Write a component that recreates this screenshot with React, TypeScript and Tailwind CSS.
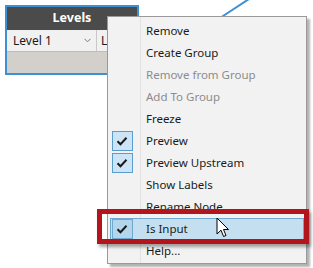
import React from "react";

type Item = { label: string; checked?: boolean; disabled?: boolean; active?: boolean };

const items: Item[] = [
  { label: "Remove" },
  { label: "Create Group" },
  { label: "Remove from Group", disabled: true },
  { label: "Add To Group", disabled: true },
  { label: "Freeze" },
  { label: "Preview", checked: true },
  { label: "Preview Upstream", checked: true },
  { label: "Show Labels" },
  { label: "Rename Node" },
  { label: "Is Input", checked: true, active: true },
  { label: "Help..." },
];

const Check = () => (
  <svg width="12" height="10" viewBox="0 0 12 10">
    <path d="M1.5 5.2 L4.5 8.2 L10.5 1.8" fill="none" stroke="#1a1a1a" strokeWidth="2" />
  </svg>
);

const MenuRow = ({ item }: { item: Item }) => (
  <div
    className={
      "flex h-[22px] items-center mx-[2px] border " +
      (item.active ? "bg-[#c4e0f0] border-[#6fa9d0]" : "border-transparent")
    }
  >
    <div className="w-[22px] h-full flex items-center justify-center shrink-0">
      {item.checked && (
        <div
          className={
            "w-[21px] h-[20px] flex items-center justify-center border " +
            (item.active ? "border-[#6fa9d0] bg-[#b3d6ec]" : "border-[#5a9ed0] bg-[#cce4f5]")
          }
        >
          <Check />
        </div>
      )}
    </div>
    <span
      className={
        "ml-[13px] text-[11.5px] " + (item.disabled ? "text-[#8c8c8c]" : "text-[#1a1a1a]")
      }
    >
      {item.label}
    </span>
  </div>
);

export default function App() {
  return (
    <div
      className="relative w-[313px] h-[268px] bg-white overflow-hidden"
      style={{ fontFamily: '"Noto Sans", "Open Sans", sans-serif' }}
    >
      {/* wire */}
      <svg className="absolute left-0 top-0" width="313" height="268">
        <line x1="220" y1="18" x2="249" y2="-1" stroke="#3f8fd4" strokeWidth="2" />
      </svg>

      {/* node */}
      <div className="relative ml-[5px] mt-[5px] w-[134px] border-2 border-[#3f8fd4] bg-[#d3d0cb]">
        <div className="h-[23px] bg-[#4b4b4b] flex items-center justify-center text-white font-bold text-[12.5px]">
          Levels
        </div>
        <div className="h-[22px] flex bg-[#f1f1f1] border-b border-[#bdbdbd]">
          <div className="w-[90px] flex items-center justify-between pl-[6px] pr-[5px] border-r border-[#c8c8c8] text-[12px] text-[#1a1a1a]">
            <span>Level 1</span>
            <svg width="7" height="5" viewBox="0 0 7 5">
              <path d="M0.5 0.8 L3.5 3.8 L6.5 0.8" fill="none" stroke="#777" strokeWidth="1" />
            </svg>
          </div>
          <div className="flex items-center pl-[4px] text-[12px] text-[#1a1a1a]">L</div>
        </div>
        <div className="h-[21px]" />
      </div>

      {/* context menu */}
      <div className="absolute left-[107px] top-[16px] w-[200px] h-[248px] bg-[#f2f2f2] border border-[#9a9a9a] shadow-[3px_3px_2px_rgba(0,0,0,0.3)] pt-[3px]">
        <div className="absolute left-[32px] top-0 bottom-0 w-px bg-[#e2e2e2]" />
        <div className="relative flex flex-col">
          {items.map((it) => (
            <MenuRow key={it.label} item={it} />
          ))}
        </div>
      </div>

      {/* highlight box */}
      <div className="absolute left-[97px] top-[209px] w-[212px] h-[35px] border-[5px] border-[#b3151d] shadow-[2px_3px_3px_rgba(0,0,0,0.35)]" />

      {/* cursor */}
      <svg className="absolute left-[216px] top-[217px]" width="14" height="22" viewBox="0 0 14 22">
        <path
          d="M1 1 L1 17 L5 13.2 L7.6 19.5 L10 18.5 L7.5 12.5 L12.5 12.5 Z"
          fill="white"
          stroke="black"
          strokeWidth="1"
          strokeLinejoin="round"
        />
      </svg>
    </div>
  );
}
